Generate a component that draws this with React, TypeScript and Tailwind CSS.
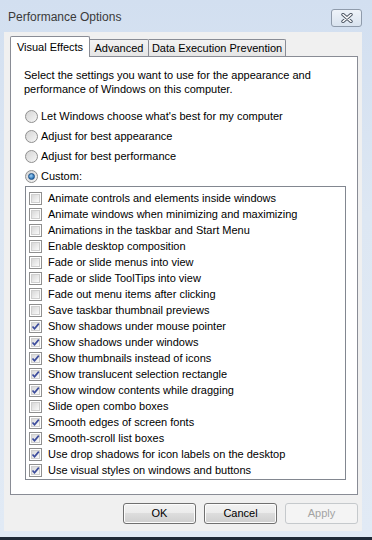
import React from "react";

const effects: [string, boolean][] = [
  ["Animate controls and elements inside windows", false],
  ["Animate windows when minimizing and maximizing", false],
  ["Animations in the taskbar and Start Menu", false],
  ["Enable desktop composition", false],
  ["Fade or slide menus into view", false],
  ["Fade or slide ToolTips into view", false],
  ["Fade out menu items after clicking", false],
  ["Save taskbar thumbnail previews", false],
  ["Show shadows under mouse pointer", true],
  ["Show shadows under windows", true],
  ["Show thumbnails instead of icons", true],
  ["Show translucent selection rectangle", true],
  ["Show window contents while dragging", true],
  ["Slide open combo boxes", false],
  ["Smooth edges of screen fonts", true],
  ["Smooth-scroll list boxes", true],
  ["Use drop shadows for icon labels on the desktop", true],
  ["Use visual styles on windows and buttons", true],
];

const radios = [
  "Let Windows choose what's best for my computer",
  "Adjust for best appearance",
  "Adjust for best performance",
  "Custom:",
];

function CheckBox({ checked }: { checked: boolean }) {
  return (
    <span className="relative flex h-[13px] w-[13px] shrink-0 items-center justify-center border border-[#8f8f8f] bg-white">
      <span className="h-[9px] w-[9px] border border-[#cfcfcf] bg-gradient-to-br from-[#d8d8d8] to-[#fafafa]" />
      {checked && (
        <svg className="absolute left-0 top-0" width="11" height="11" viewBox="0 0 11 11">
          <path d="M2.5 5.5 L4.5 7.8 L8.8 2.6" fill="none" stroke="#3c4c9c" strokeWidth="1.7" />
        </svg>
      )}
    </span>
  );
}

function Radio({ checked }: { checked: boolean }) {
  return (
    <span className="flex h-[13px] w-[13px] shrink-0 items-center justify-center rounded-full border border-[#8f8f8f] bg-gradient-to-br from-[#d4d4d4] to-[#f6f6f6]">
      {checked && (
        <span className="h-[7px] w-[7px] rounded-full border border-[#1d4f85] bg-[radial-gradient(circle_at_40%_35%,#9fd0f5,#2a74b8_70%)]" />
      )}
    </span>
  );
}

function Button({ label, disabled }: { label: string; disabled?: boolean }) {
  return disabled ? (
    <div className="flex h-[21px] w-[73px] items-center justify-center rounded-[3px] border border-[#c5c9cc] bg-[#f4f4f4] text-[#a3a3a3]">
      {label}
    </div>
  ) : (
    <div className="flex h-[21px] w-[73px] items-center justify-center rounded-[3px] border border-[#707070] bg-[linear-gradient(to_bottom,#f2f2f2_0%,#ebebeb_50%,#dddddd_50%,#cfcfcf_100%)] shadow-[inset_0_0_0_1px_#fcfcfc]">
      {label}
    </div>
  );
}

export default function App() {
  return (
    <div className="flex h-[540px] w-[372px] flex-col bg-[#1f2a38] font-['Liberation_Sans',Arial,sans-serif] text-[11px] text-black">
      <div className="flex flex-col bg-[linear-gradient(to_bottom,#d2dff0,#dde7f3_40%,#e1eaf5)]">
        {/* title bar */}
        <div className="flex h-[32px] items-start">
          <span className="pl-[8px] pt-[10px] text-[12px] leading-[15px] text-[#3a3a3a]">Performance Options</span>
          <div className="ml-auto mr-[10px] mt-[9px] flex h-[18px] w-[31px] items-center justify-center rounded-[3px] border border-[#8f9bab] bg-[linear-gradient(to_bottom,#eef3f9,#d9e3ef)]">
            <svg width="14" height="10" viewBox="0 0 14 10">
              <path d="M3 1.5 L11 8.5 M11 1.5 L3 8.5" stroke="#4b5563" strokeWidth="3.4" strokeLinecap="round" />
              <path d="M3 1.5 L11 8.5 M11 1.5 L3 8.5" stroke="#ffffff" strokeWidth="1.6" strokeLinecap="round" />
            </svg>
          </div>
        </div>

        {/* client area */}
        <div className="ml-[4px] mr-[10px] flex h-[499px] flex-col bg-[#f0f0f0] pl-[6px] pr-[4px] pt-[4px]">
          {/* tabs */}
          <div className="flex h-[20px] items-end">
            <div className="relative z-10 -mb-px flex h-[21px] w-[80px] items-center justify-center rounded-t-[2px] border border-b-0 border-[#898c95] bg-white">
              Visual Effects
            </div>
            <div className="flex h-[17px] w-[59px] items-center justify-center rounded-tr-[2px] border border-b-0 border-l-0 border-[#898c95] bg-[linear-gradient(to_bottom,#f3f3f3,#e5e5e5)]">
              Advanced
            </div>
            <div className="flex h-[17px] w-[137px] items-center justify-center whitespace-nowrap rounded-tr-[2px] border border-b-0 border-l-0 border-[#898c95] bg-[linear-gradient(to_bottom,#f3f3f3,#e5e5e5)]">
              Data Execution Prevention
            </div>
          </div>

          {/* tab page */}
          <div className="flex h-[439px] flex-col border border-[#898c95] bg-white pl-[13px] pt-[11px]">
            <p className="leading-[14px]">
              Select the settings you want to use for the appearance and
              <br />
              performance of Windows on this computer.
            </p>

            <div className="mt-[10px] flex flex-col">
              {radios.map((r, i) => (
                <div key={r} className="flex h-[20px] items-center pl-[1px]">
                  <Radio checked={i === 3} />
                  <span className="ml-[3px]">{r}</span>
                </div>
              ))}
            </div>

            <div className="ml-[1px] flex w-[321px] flex-col border border-[#828790] pb-[1px] pt-[3px]">
              {effects.map(([label, checked]) => (
                <div key={label} className="flex h-[16px] items-center pl-[3px]">
                  <CheckBox checked={checked} />
                  <span className="ml-[6px] whitespace-nowrap">{label}</span>
                </div>
              ))}
            </div>
          </div>

          {/* buttons */}
          <div className="mt-[8px] flex justify-end gap-[8px]">
            <Button label="OK" />
            <Button label="Cancel" />
            <Button label="Apply" disabled />
          </div>
        </div>

        <div className="h-[6px]" />
      </div>
    </div>
  );
}
